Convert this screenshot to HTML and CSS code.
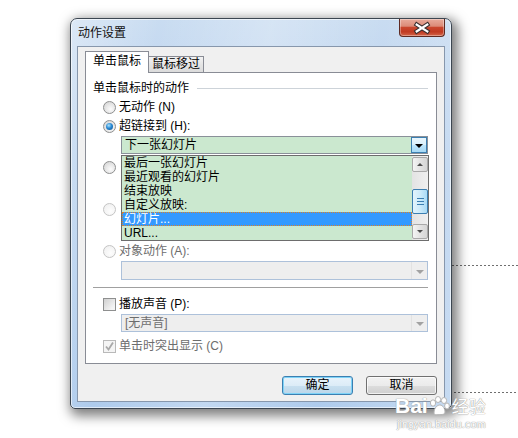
FILE: index.html
```html
<!DOCTYPE html>
<html lang="zh-CN">
<head>
    <meta charset="UTF-8">
    <title>动作设置</title>
    <link rel="stylesheet" href="styles.css">
</head>
<body>
<div class="desk">
    <!-- garis putus-putus dari slide di belakang dialog -->
    <div class="slide-line line-a"></div>
    <div class="slide-line line-b"></div>

    <div class="window">
        <div class="titlebar">
            <span class="title">动作设置</span>
            <button class="close">
                <svg width="46" height="18" viewBox="0 0 46 18">
                    <path d="M17.5 5.5 L28.5 12.5 M28.5 5.5 L17.5 12.5" stroke="#3b3030" stroke-width="4.6" stroke-linecap="square" fill="none"/>
                    <path d="M17.5 5.5 L28.5 12.5 M28.5 5.5 L17.5 12.5" stroke="#fff" stroke-width="2.4" stroke-linecap="square" fill="none"/>
                </svg>
            </button>
        </div>

        <div class="client">
            <div class="tabs">
                <div class="tab active">单击鼠标</div>
                <div class="tab">鼠标移过</div>
            </div>

            <div class="panel">
                <div class="group"><span>单击鼠标时的动作</span><i class="rule"></i></div>

                <div class="opt row1"><span class="radio"></span><span>无动作 (<u>N</u>)</span></div>
                <div class="opt row2"><span class="radio checked"></span><span>超链接到 (<u>H</u>):</span></div>
                <div class="combo green">
                    <span class="combo-text">下一张幻灯片</span>
                    <span class="combo-btn"><i class="tri"></i></span>
                </div>

                <!-- dua baris ini tertutup oleh daftar yang terbuka -->
                <div class="opt row3"><span class="radio"></span></div>
                <div class="spacer"></div>
                <div class="opt row4 off"><span class="radio"></span></div>
                <div class="spacer"></div>
                <div class="opt row5 off"><span class="radio"></span><span>对象动作 (<u>A</u>):</span></div>
                <div class="combo disabled c2">
                    <span class="combo-text"></span>
                    <span class="combo-btn"><i class="tri"></i></span>
                </div>

                <div class="sep"></div>

                <div class="opt row6"><span class="check"></span><span>播放声音 (<u>P</u>):</span></div>
                <div class="combo disabled c3">
                    <span class="combo-text">[无声音]</span>
                    <span class="combo-btn"><i class="tri"></i></span>
                </div>
                <div class="opt row7 off"><span class="check checked">
                    <svg width="11" height="11" viewBox="0 0 11 11"><path d="M2 5.5 L4.5 8.5 L9 1.5" stroke="#a8a8a8" stroke-width="1.8" fill="none"/></svg>
                </span><span>单击时突出显示 (<u>C</u>)</span></div>

                <!-- daftar dropdown yang sedang terbuka -->
                <div class="droplist">
                    <div class="items">
                        <div class="item">最后一张幻灯片</div>
                        <div class="item">最近观看的幻灯片</div>
                        <div class="item">结束放映</div>
                        <div class="item">自定义放映:</div>
                        <div class="item selected">幻灯片...</div>
                        <div class="item">URL...</div>
                    </div>
                    <div class="scrollbar">
                        <div class="sb-btn"><i class="arrow up"></i></div>
                        <div class="sb-thumb"><i></i><i></i><i></i></div>
                        <div class="sb-btn down"><i class="arrow dn"></i></div>
                    </div>
                </div>
            </div>

            <div class="buttons">
                <button class="btn default">确定</button>
                <button class="btn">取消</button>
            </div>
        </div>
    </div>

    <div class="watermark">
        <div class="wm-top">Bai<svg width="22" height="20" viewBox="0 0 22 20">
            <g fill="#fff" stroke="#b5b5b5" stroke-width="1">
                <ellipse cx="5" cy="7" rx="2.6" ry="3.2"/>
                <ellipse cx="10" cy="3.5" rx="2.6" ry="3"/>
                <ellipse cx="16" cy="4.5" rx="2.6" ry="3"/>
                <ellipse cx="19" cy="10" rx="2.4" ry="3"/>
                <path d="M6 17 C6 11 10 9 12 9 C15 9 17 13 17 16 C17 19 13 18.5 11.5 18.5 C9 18.5 6 19.5 6 17 Z"/>
            </g>
        </svg><span class="wm-cn">经验</span></div>
        <div class="wm-url">jingyan.baidu.com</div>
    </div>
</div>
</body>
</html>
```

FILE: styles.css
```css
* {
    box-sizing: border-box;
}

body {
    margin: 0;
    background: #fff;
    font-family: "Liberation Sans", "Noto Sans CJK SC", sans-serif;
    font-size: 12px;
    color: #000;
}

.desk {
    position: relative;
    width: 518px;
    height: 438px;
    overflow: hidden;
    padding: 18px 0 0 70px;
}

.slide-line {
    position: absolute;
    height: 1px;
    background: repeating-linear-gradient(to right, #6f6f6f 0 2px, transparent 2px 4px);
}

.line-a {
    left: 440px;
    top: 265px;
    width: 78px;
}

.line-b {
    left: 430px;
    top: 392px;
    width: 88px;
}

/* jendela dialog */
.window {
    position: relative;
    z-index: 1;
    width: 382px;
    height: 391px;
    border: 1px solid #3c4651;
    border-radius: 7px 7px 5px 5px;
    padding: 0 6px 6px 6px;
    display: flex;
    flex-direction: column;
    background:
        linear-gradient(100deg, rgba(255,255,255,0.35) 0%, rgba(255,255,255,0) 20%, rgba(255,255,255,0.25) 45%, rgba(255,255,255,0) 70%, rgba(255,255,255,0.3) 100%),
        linear-gradient(to bottom, #c9dcf1, #b7d1ee 40%, #aecbec);
    box-shadow: inset 0 0 0 1px rgba(255,255,255,0.6), 3px 4px 12px 3px rgba(0,0,0,0.5);
}

.titlebar {
    height: 27px;
    display: flex;
    justify-content: space-between;
    align-items: flex-start;
    padding-left: 1px;
}

.title {
    line-height: 28px;
    font-size: 12px;
    color: #111;
}

.close {
    width: 46px;
    height: 18px;
    padding: 0;
    border: 1px solid #5e2a22;
    border-top: none;
    border-radius: 0 0 4px 4px;
    background: linear-gradient(to bottom, #e8ab9c 0%, #dc8b78 42%, #c9462d 50%, #c03a22 75%, #d3664a 100%);
    box-shadow: inset 0 0 0 1px rgba(255,255,255,0.35);
    display: flex;
    align-items: center;
    justify-content: center;
}

.close svg {
    display: block;
}

.client {
    flex: 1;
    border: 1px solid #8797ac;
    background: #f0f0f0;
    padding: 5px 7px 0 7px;
}

/* tab */
.tabs {
    display: flex;
    align-items: flex-end;
    height: 21px;
    margin-bottom: -1px;
}

.tab {
    height: 17px;
    width: 55px;
    line-height: 15px;
    text-align: center;
    border: 1px solid #898c95;
    border-left: none;
    border-bottom: none;
    background: linear-gradient(to bottom, #f3f3f3, #e4e4e4 50%, #dadada);
}

.tab.active {
    position: relative;
    z-index: 2;
    width: 64px;
    height: 22px;
    line-height: 19px;
    border-left: 1px solid #898c95;
    background: #fff;
}

.panel {
    position: relative;
    width: 352px;
    height: 292px;
    border: 1px solid #898c95;
    background: #fff;
}

.group {
    display: flex;
    align-items: center;
    gap: 8px;
    height: 14px;
    line-height: 14px;
    margin: 8px 8px 0 7px;
}

.rule {
    flex: 1;
    border-top: 1px solid #cdd3d9;
}

.opt {
    display: flex;
    align-items: center;
    gap: 3px;
    height: 14px;
    line-height: 14px;
    margin-left: 17px;
    white-space: nowrap;
}

.opt u {
    text-decoration: none;
}

.row1 { margin-top: 5px; }
.row2 { margin-top: 5px; }
.row3 { margin-top: 6px; }
.row4 { margin-top: 4px; }
.row5 { margin-top: 4px; }
.row6 { margin-top: 9px; }
.row7 { margin-top: 7px; }

.spacer {
    height: 20px;
    margin-top: 4px;
}

.off {
    color: #6d6d6d;
}

.radio {
    position: relative;
    flex: none;
    width: 13px;
    height: 13px;
    border-radius: 50%;
    border: 1px solid #8e8f8f;
    background: radial-gradient(circle at 60% 65%, #fbfbfb 0%, #e8e8e8 45%, #cfcfcf 100%);
}

.radio.checked::after {
    content: "";
    position: absolute;
    left: 2px;
    top: 2px;
    width: 7px;
    height: 7px;
    border-radius: 50%;
    background: radial-gradient(circle at 40% 35%, #aee4fc 0%, #2a8ad4 45%, #0d4a86 100%);
}

.off .radio {
    border-color: #c4c4c4;
    background: radial-gradient(circle at 60% 65%, #fdfdfd, #eeeeee);
}

.check {
    flex: none;
    width: 13px;
    height: 13px;
    border: 1px solid #8e8f8f;
    background: linear-gradient(135deg, #d0d0d0, #f4f4f4 80%);
    display: flex;
    align-items: center;
    justify-content: center;
}

.check.checked {
    border-color: #b9b9b9;
    background: #f4f4f4;
}

/* combo box */
.combo {
    display: flex;
    width: 307px;
    height: 18px;
    margin: 3px 0 0 35px;
    border: 1px solid #8a9099;
    line-height: 16px;
}

.combo-text {
    flex: 1;
    padding-left: 3px;
}

.combo-btn {
    width: 16px;
    display: flex;
    align-items: center;
    justify-content: center;
}

.tri {
    width: 0;
    height: 0;
    border-left: 4px solid transparent;
    border-right: 4px solid transparent;
    border-top: 4px solid #000;
    margin-top: 2px;
}

.green {
    background: #cbe8cf;
}

.green .combo-btn {
    border: 1px solid #3c7fb1;
    background: linear-gradient(to bottom, #eaf6fd, #d9f0fc 50%, #bee6fd 50%, #a7d9f5);
}

.disabled {
    background: #eeeeee;
    border-color: #adc1da;
    color: #6d6d6d;
}

.disabled .combo-btn {
    border-left: 1px solid #e2e2e2;
}

.disabled .tri {
    border-top-color: #a2a2a2;
}

.c2 {
    height: 19px;
}

.sep {
    height: 1px;
    margin: 7px 8px 0 7px;
    background: #a0a0a0;
}

/* daftar terbuka */
.droplist {
    position: absolute;
    left: 35px;
    top: 82px;
    width: 308px;
    height: 86px;
    border: 1px solid #6d6d6d;
    background: #cbe8cf;
    display: flex;
}

.items {
    flex: 1;
}

.item {
    height: 14px;
    line-height: 14px;
    padding-left: 2px;
    white-space: nowrap;
}

.item.selected {
    background: #3399ff;
    color: #fff;
    outline: 1px dotted #d9822b;
    outline-offset: -1px;
}

.scrollbar {
    width: 16px;
    background: linear-gradient(to right, #e3e3e3, #f0f0f0);
    display: flex;
    flex-direction: column;
}

.sb-btn {
    height: 15px;
    margin-top: 1px;
    border: 1px solid #a9a9a9;
    border-radius: 2px;
    background: linear-gradient(to right, #f4f4f4, #e3e3e3 50%, #d6d6d6);
    display: flex;
    align-items: center;
    justify-content: center;
}

.sb-btn.down {
    margin-top: 10px;
}

.arrow {
    width: 0;
    height: 0;
    border-left: 3px solid transparent;
    border-right: 3px solid transparent;
}

.arrow.up {
    border-bottom: 3px solid #4d4d4d;
}

.arrow.dn {
    border-top: 3px solid #4d4d4d;
}

.sb-thumb {
    height: 25px;
    margin-top: 17px;
    border: 1px solid #3c7fb1;
    border-radius: 2px;
    background: linear-gradient(to right, #e3f4fc, #cdebfa 50%, #a9dbf6);
    display: flex;
    flex-direction: column;
    align-items: center;
    justify-content: center;
    gap: 2px;
}

.sb-thumb i {
    width: 7px;
    height: 1px;
    background: #3c7fb1;
}

/* tombol */
.buttons {
    display: flex;
    justify-content: flex-end;
    gap: 13px;
    margin-top: 12px;
}

.btn {
    width: 71px;
    height: 19px;
    padding: 0;
    font-family: "Liberation Sans", "Noto Sans CJK SC", sans-serif;
    font-size: 12px;
    line-height: 15px;
    color: #000;
    border: 1px solid #707070;
    border-radius: 3px;
    background: linear-gradient(to bottom, #f2f2f2, #ebebeb 50%, #dddddd 50%, #cfcfcf);
    box-shadow: inset 0 0 0 1px rgba(255,255,255,0.7);
}

.btn.default {
    border-color: #3c7fb1;
    background: linear-gradient(to bottom, #e8f3fb, #dcecf7 50%, #c8e0f0 50%, #bcd6e9);
    box-shadow: inset 0 0 0 1px #7ed3f7;
}

/* watermark */
.watermark {
    position: absolute;
    z-index: 2;
    left: 395px;
    top: 394px;
    color: #fff;
    font-family: "Liberation Sans", sans-serif;
    text-shadow: 0 0 1px #9a9a9a, 0 0 1px #9a9a9a;
}

.wm-top {
    display: flex;
    align-items: center;
    font-size: 21px;
    font-weight: bold;
    line-height: 24px;
}

.wm-cn {
    font-family: "Noto Sans CJK SC", sans-serif;
    font-size: 17px;
    font-weight: normal;
    margin-left: 2px;
}

.wm-url {
    font-size: 11px;
    line-height: 12px;
    margin-left: 2px;
}
```
